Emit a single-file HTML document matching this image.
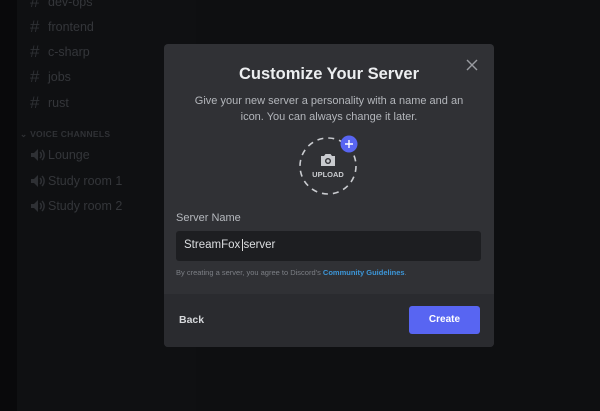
<!DOCTYPE html>
<html><head><meta charset="utf-8"><style>
*{margin:0;padding:0;box-sizing:border-box}
body{width:600px;height:411px;overflow:hidden;background:#0e0f11;font-family:"Liberation Sans",sans-serif;position:relative}
.strip{position:absolute;left:0;top:0;width:17px;height:411px;background:#09090b}
.side{position:absolute;left:17px;top:0;width:179px;height:411px;background:#0f1012}
.ch{position:absolute;left:30px;color:#34363a;font-size:12.5px;display:flex;align-items:center}
.ch .h{font-size:17px;width:18px;color:#2e3034}
.ch svg{width:18px}
.vc{position:absolute;left:20px;top:129px;color:#303236;font-size:8.5px;font-weight:bold;letter-spacing:.3px}
.modal{position:absolute;left:164px;top:44px;width:330px;height:303px;background:#303135;border-radius:4px;overflow:hidden}
.foot{position:absolute;left:0;top:250px;width:330px;height:53px;background:#2a2b2f}
h1{position:absolute;top:21px;width:100%;text-align:center;color:#eceef0;font-size:16.5px;font-weight:bold}
.sub{position:absolute;top:49px;width:100%;text-align:center;color:#b3b6bb;font-size:11px;line-height:16px}
.x{position:absolute;right:16px;top:15px}
.lab{position:absolute;left:12px;top:168px;color:#b5b8bd;font-size:11px}
.inp{position:absolute;left:12px;top:187px;width:305px;height:30px;background:#1d1e21;border-radius:3px;color:#dcdee1;font-size:11.5px;padding:8px 8px}
.tos{position:absolute;left:12px;top:224px;color:#7c7f85;font-size:7.5px}
.tos b{color:#3c96d8}
.back{position:absolute;left:15px;top:270px;color:#d6d8db;font-size:10.5px;font-weight:bold}
.btn{position:absolute;left:245px;top:262px;width:71px;height:28px;background:#5865f2;border-radius:3px;color:#fff;font-size:10px;font-weight:bold;text-align:center;line-height:28px}
</style></head><body>
<div class="strip"></div><div class="side"></div>
<div class="ch" style="top:-8px"><span class="h">#</span>dev-ops</div>
<div class="ch" style="top:17px"><span class="h">#</span>frontend</div>
<div class="ch" style="top:42px"><span class="h">#</span>c-sharp</div>
<div class="ch" style="top:67px"><span class="h">#</span>jobs</div>
<div class="ch" style="top:93px"><span class="h">#</span>rust</div>
<div class="vc">⌄ VOICE CHANNELS</div>
<div class="ch" style="top:148px"><svg height="14" viewBox="0 0 18 14"><path d="M1 5h3l4-4v12l-4-4H1z" fill="#2e3034"/><path d="M10 4a4 4 0 0 1 0 6M12 2a7 7 0 0 1 0 10" stroke="#2e3034" stroke-width="1.5" fill="none"/></svg>Lounge</div>
<div class="ch" style="top:174px"><svg height="14" viewBox="0 0 18 14"><path d="M1 5h3l4-4v12l-4-4H1z" fill="#2e3034"/><path d="M10 4a4 4 0 0 1 0 6M12 2a7 7 0 0 1 0 10" stroke="#2e3034" stroke-width="1.5" fill="none"/></svg>Study room 1</div>
<div class="ch" style="top:199px"><svg height="14" viewBox="0 0 18 14"><path d="M1 5h3l4-4v12l-4-4H1z" fill="#2e3034"/><path d="M10 4a4 4 0 0 1 0 6M12 2a7 7 0 0 1 0 10" stroke="#2e3034" stroke-width="1.5" fill="none"/></svg>Study room 2</div>
<div class="modal">
<div class="foot"></div>
<h1>Customize Your Server</h1>
<svg class="x" width="12" height="12" viewBox="0 0 12 12"><path d="M1 1L11 11M11 1L1 11" stroke="#9a9ca1" stroke-width="1.4"/></svg>
<div class="sub">Give your new server a personality with a name and an<br>icon. You can always change it later.</div>
<svg style="position:absolute;left:133px;top:90px" width="66" height="64" viewBox="0 0 66 64">
<circle cx="31" cy="32" r="28" fill="none" stroke="#c9cbcf" stroke-width="1.6" stroke-dasharray="6 5"/>
<circle cx="52" cy="10" r="8.5" fill="#5865f2"/>
<path d="M52 6v8M48 10h8" stroke="#fff" stroke-width="1.4"/>
<path d="M24 22h3l1.5-2h5l1.5 2h3v10h-14z" fill="#c9cbcf"/>
<circle cx="31" cy="27" r="3" fill="#303135"/><circle cx="31" cy="27" r="1.6" fill="#c9cbcf"/>
<text x="31" y="43" text-anchor="middle" fill="#c9cbcf" font-size="7.5" font-weight="bold" font-family="Liberation Sans">UPLOAD</text>
</svg>
<div class="lab">Server Name</div>
<div class="inp">StreamFox <span style="border-left:1px solid #ddd;margin-left:-1px"></span>server</div>
<div class="tos">By creating a server, you agree to Discord's <b>Community Guidelines</b>.</div>
<div class="back">Back</div>
<div class="btn">Create</div>
</div>
</body></html>
